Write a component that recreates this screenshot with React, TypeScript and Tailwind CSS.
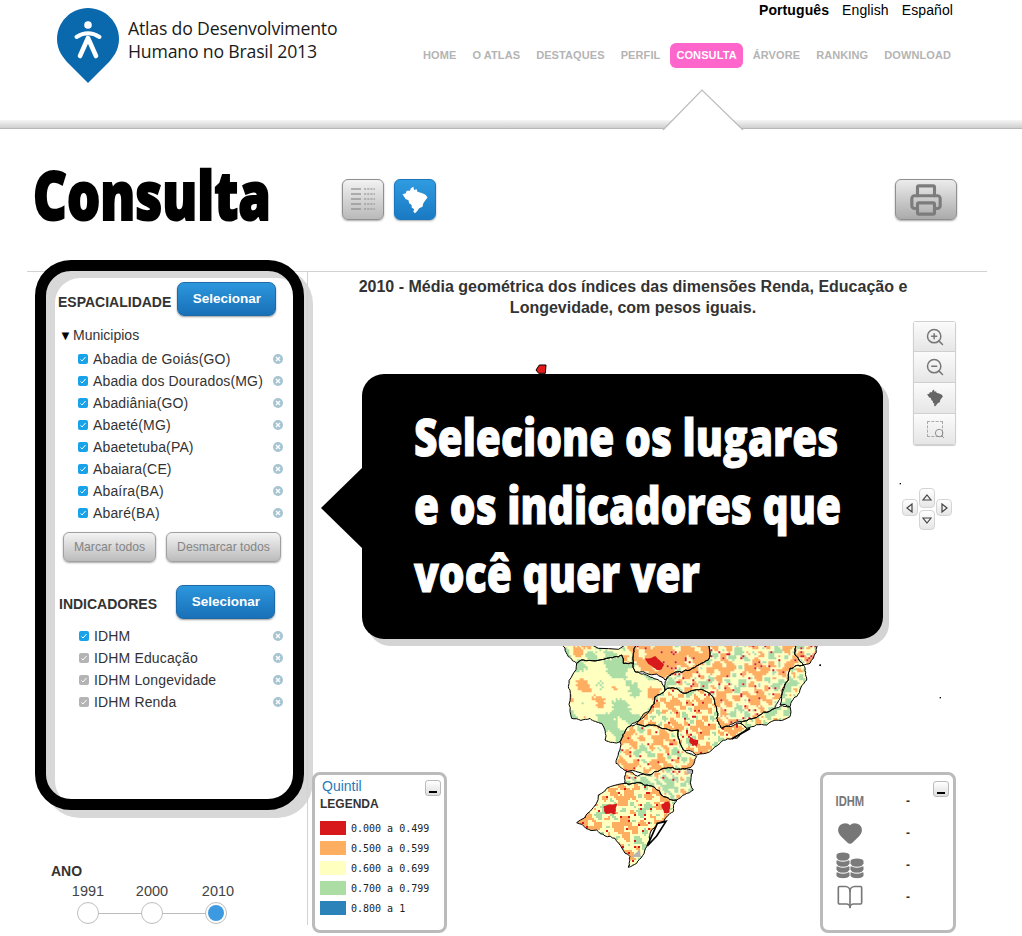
import { BookOpen, Heart, Printer, ZoomIn, ZoomOut, Search } from "lucide-react";

const NAV = ["HOME", "O ATLAS", "DESTAQUES", "PERFIL", "CONSULTA", "ÁRVORE", "RANKING", "DOWNLOAD"];
const PLACES = [
  "Abadia de Goiás(GO)",
  "Abadia dos Dourados(MG)",
  "Abadiânia(GO)",
  "Abaeté(MG)",
  "Abaetetuba(PA)",
  "Abaiara(CE)",
  "Abaíra(BA)",
  "Abaré(BA)",
];
const INDICATORS = [
  { name: "IDHM", active: true },
  { name: "IDHM Educação", active: false },
  { name: "IDHM Longevidade", active: false },
  { name: "IDHM Renda", active: false },
];
const LEGEND = [
  { color: "bg-[#d7191c]", label: "0.000 a 0.499" },
  { color: "bg-[#fdae61]", label: "0.500 a 0.599" },
  { color: "bg-[#ffffbf]", label: "0.600 a 0.699" },
  { color: "bg-[#abdda4]", label: "0.700 a 0.799" },
  { color: "bg-[#2b83ba]", label: "0.800 a 1" },
];

const BRAZIL = "M3 12L7 11L8 8L12 8L13 5L16 3L17 7L20 6L21 9L24 10L27 11L31 13L33 16L30 20L28 23L27 27L23 29L21 32L18 35L16 33L17 30L14 28L14 25L11 23L10 19L7 18L5 15Z";

// zoomed map coordinates: page x = 540 + x / 3, page y = 630 + y / 3
const STATES = [
  { id: "mt", pts: "60,30 290,30 280,70 280,100 250,100 245,75 200,85 130,90 110,100 85,80", o: 0.7, g: -0.2, r: 0.0, f: 0.7 },
  { id: "ms", pts: "110,100 130,90 200,85 245,75 250,100 280,100 285,125 320,135 365,155 375,180 345,200 330,240 300,270 260,295 240,335 195,330 185,280 150,265 95,265 90,180 85,170", o: 1.1, g: -0.3, r: 0.0, f: 0.45 },
  { id: "go", pts: "290,30 510,30 505,90 450,120 400,130 375,150 320,130 285,125 280,100 280,70", o: -0.45, g: -1.2, r: 0.03, f: 0.7 },
  { id: "mg", pts: "510,30 775,30 765,75 790,105 750,115 745,150 720,205 705,235 640,265 600,275 545,295 530,265 530,235 510,190 490,180 435,190 410,175 375,180 375,155 400,130 450,120 505,90", o: 0.2, g: -0.75, r: 0.035, f: 1 },
  { id: "ba", pts: "775,30 830,30 810,100 790,105 765,75", o: -0.1, g: -0.9, r: 0.2, f: 1 },
  { id: "es", pts: "750,115 790,105 800,150 770,200 750,230 720,225 745,150", o: 1.2, g: 0.1, r: 0.0, f: 1.2 },
  { id: "rj", pts: "705,235 750,230 750,260 680,285 620,295 600,280 640,265", o: 1, g: 0.0, r: 0.01, f: 1.4 },
  { id: "sp", pts: "375,180 410,175 435,190 490,180 510,190 530,235 530,265 545,295 600,280 620,295 590,325 540,340 470,375 430,360 415,300 340,285 290,282 330,240 345,200", o: 0.15, g: -0.95, r: 0.035, f: 1.2 },
  { id: "pr", pts: "260,295 290,282 340,285 415,300 430,360 470,380 455,410 410,418 360,420 330,435 260,425 228,400 240,335", o: 0.25, g: -0.8, r: 0.025, f: 1 },
  { id: "sc", pts: "258,425 330,435 360,420 410,418 458,420 460,480 410,510 370,500 340,470 290,458 255,460", o: 1, g: -0.05, r: 0.012, f: 1.3 },
  { id: "rs", pts: "255,460 290,458 340,470 370,500 410,510 400,545 360,580 320,650 290,700 265,712 270,680 225,625 170,600 110,578 175,495", o: 0.3, g: -0.7, r: 0.03, f: 0.9 },
];
const RED_PATCHES = [
  "315,85 345,78 372,105 365,118 350,120",
  "190,530 232,520 228,552 198,552",
  "365,522 388,515 388,548 372,550",
  "450,320 475,330 470,350 450,340",
];
const CELL = 6;
const COLORS = ["#ffffbf", "#fdae61", "#abdda4", "#d7191c"];

function rng(seed: number) {
  let s = seed;
  return () => {
    s = (s * 16807) % 2147483647;
    return s / 2147483647;
  };
}

// same offset for both states that share an edge, so borders stay together
function jagged(pts: string) {
  const list = pts.split(" ").map((p) => p.split(",").map(Number));
  const split = (a: number[], b: number[], depth: number): number[][] => {
    const len = Math.hypot(b[0] - a[0], b[1] - a[1]);
    if (depth === 0 || len < 8) return [a];
    const [p, q] = a[0] < b[0] || (a[0] === b[0] && a[1] < b[1]) ? [a, b] : [b, a];
    const h = Math.sin(p[0] * 12.9 + p[1] * 78.2 + q[0] * 37.7 + q[1] * 11.3) * 43758.5;
    const t = (h - Math.floor(h) - 0.5) * 0.28 * len;
    const mid = [(a[0] + b[0]) / 2 + ((q[1] - p[1]) / len) * t, (a[1] + b[1]) / 2 - ((q[0] - p[0]) / len) * t];
    return [...split(a, mid, depth - 1), ...split(mid, b, depth - 1)];
  };
  return list
    .flatMap((p, i) => split(p, list[(i + 1) % list.length], 3))
    .map((p) => `${p[0].toFixed(1)},${p[1].toFixed(1)}`)
    .join(" ");
}

const OUTLINES = STATES.map((s) => ({ ...s, outline: jagged(s.pts) }));

function statePaths(state: (typeof STATES)[number], seed: number) {
  const rand = rng(seed * 7919 + 13);
  const nums = state.pts.split(/[ ,]/).map(Number);
  const xs = nums.filter((_, i) => i % 2 === 0);
  const ys = nums.filter((_, i) => i % 2 === 1);
  const paths = ["", "", "", ""];
  const f = state.f;
  for (let x = Math.min(...xs) - 20; x < Math.max(...xs) + 20; x += CELL) {
    for (let y = Math.min(...ys) - 20; y < Math.max(...ys) + 20; y += CELL) {
      const n =
        (Math.sin(x * 0.061 * f + seed) +
          Math.sin(y * 0.073 * f + seed * 2) +
          Math.sin((x + y) * 0.113 * f) +
          Math.sin((x - y) * 0.151 * f + seed)) /
          2 +
        (rand() - 0.5) * 0.5;
      let c = 0;
      if (rand() < state.r) c = 3;
      else if (n < state.g) c = 2;
      else if (n > state.o) c = 1;
      paths[c] += `M${x} ${y}h${CELL}v${CELL}h-${CELL}z`;
    }
  }
  return paths;
}

function BrazilMap() {
  return (
    <svg className="absolute left-[222px] top-[88px]" width={420} height={520} viewBox="-30 -810 1260 1560">
      <defs>
        {OUTLINES.map((s) => (
          <clipPath key={s.id} id={`clip-${s.id}`}>
            <polygon points={s.outline} />
          </clipPath>
        ))}
      </defs>
      {OUTLINES.map((s, i) => (
        <g key={s.id} clipPath={`url(#clip-${s.id})`}>
          {statePaths(s, i + 3).map((d, c) => (
            <path key={c} d={d} fill={COLORS[c]} />
          ))}
        </g>
      ))}
      {RED_PATCHES.map((pts) => (
        <polygon key={pts} points={jagged(pts)} fill="#d7191c" />
      ))}
      <path d="M440 420L458 420L458 432L440 432Z M275 680L300 658L302 682Z" fill="#b5b5b5" />
      {OUTLINES.map((s) => (
        <polygon key={s.id} points={s.outline} fill="none" stroke="#000" strokeWidth={3} strokeLinejoin="round" />
      ))}
      <path d="M352 580L378 574L350 618L322 648Z" fill="#fff" stroke="#000" strokeWidth={5} />
      <path d="M575 327L630 295" stroke="#000" strokeWidth={6} />
      <polygon points="-12,-780 -2,-795 18,-795 16,-770 -4,-770" fill="#e31a1c" stroke="#000" strokeWidth={3} />
      <rect x={838} y={103} width={5} height={5} fill="#000" />
      <rect x={1079} y={-441} width={4} height={4} fill="#000" />
      <rect x={1199} y={201} width={4} height={4} fill="#000" />
    </svg>
  );
}

function Logo() {
  return (
    <svg width={62} height={76} viewBox="0 0 62 76">
      <path d="M31 0C48 0 62 14 62 31C62 42 56 50 50 56L31 75L12 56C6 50 0 42 0 31C0 14 14 0 31 0Z" fill="#0a68ac" />
      <circle cx={31} cy={17} r={3.8} fill="#fff" />
      <path d="M19.5 29Q31 21.5 42.5 29" fill="none" stroke="#fff" strokeWidth={4} strokeLinecap="round" />
      <path d="M23 48L31 30L39 48" fill="none" stroke="#fff" strokeWidth={4.6} strokeLinecap="round" strokeLinejoin="round" />
    </svg>
  );
}

function TableGlyph() {
  return (
    <svg width={26} height={28} viewBox="0 0 26 28" stroke="#8a8a8a" strokeWidth={1.2}>
      {[3, 8, 13, 18, 23].map((y) => (
        <g key={y}>
          <path d="M1 0h10" transform={`translate(0 ${y})`} />
          <path d="M14 0h11" strokeDasharray="2.2 1" transform={`translate(0 ${y})`} />
        </g>
      ))}
    </svg>
  );
}

function CheckMark({ active }: { active: boolean }) {
  return (
    <span className={`flex h-[10px] w-[10px] shrink-0 items-center justify-center rounded-[2px] ${active ? "bg-[#17a2ea]" : "bg-[#b4b4b4]"}`}>
      <svg width={8} height={8} viewBox="0 0 8 8" fill="none" stroke="#fff" strokeWidth={1}>
        <path d="M1.5 4.5L3 6L6.5 2" />
      </svg>
    </span>
  );
}

function RemoveIcon() {
  return (
    <svg width={10} height={10} viewBox="0 0 10 10" className="shrink-0">
      <circle cx={5} cy={5} r={5} fill="#a6c4d2" />
      <path d="M3 3L7 7M7 3L3 7" stroke="#fff" strokeWidth={1.3} />
    </svg>
  );
}

function SelectButton() {
  return (
    <button className="h-[34px] w-[99px] rounded-[7px] border border-[#1d6aa8] bg-gradient-to-b from-[#2c97dd] to-[#1970b8] pl-[1px] pt-[1px] text-[13.5px] font-bold text-white shadow-[0_1px_2px_rgba(0,0,0,0.4)]">
      Selecionar
    </button>
  );
}

function GrayButton({ label, width }: { label: string; width: string }) {
  return (
    <button className={`h-[30px] ${width} rounded-[6px] border border-[#a0a0a0] bg-gradient-to-b from-[#f3f3f3] to-[#bcbcbc] text-[12.2px] text-[#858585] shadow-[0_1px_2px_rgba(0,0,0,0.35)]`}>
      {label}
    </button>
  );
}

function Row({ label, active, inset }: { label: string; active: boolean; inset: string }) {
  return (
    <div className={`flex h-[22px] items-center ${inset} text-[14px] tracking-[0.15px] text-[#333]`}>
      <CheckMark active={active} />
      <span className="ml-[5px] flex-1 whitespace-nowrap">{label}</span>
      <RemoveIcon />
    </div>
  );
}

function MinusButton() {
  return (
    <span className="flex h-[16px] w-[16px] items-end justify-center rounded-[3px] border border-[#bbb] bg-gradient-to-b from-white to-[#dedede] pb-[2px]">
      <span className="h-[2px] w-[8px] bg-black" />
    </span>
  );
}

function ToolButton({ children, extra }: { children: React.ReactNode; extra: string }) {
  return (
    <div className={`flex h-[31px] items-center justify-center border border-[#d0d0d0] bg-gradient-to-b from-[#fbfbfb] to-[#e6e6e6] ${extra}`}>
      {children}
    </div>
  );
}

function PanButton({ d, extra }: { d: string; extra: string }) {
  return (
    <div className={`absolute flex items-center justify-center rounded-[4px] border border-[#d4d4d4] bg-gradient-to-b from-white to-[#e6e6e6] ${extra}`}>
      <svg width={10} height={10} viewBox="0 0 10 10" fill="none" stroke="#444" strokeWidth={1.2}>
        <path d={d} />
      </svg>
    </div>
  );
}

function Coins() {
  const stack = (x: number, ys: number[]) =>
    ys.map((y) => (
      <g key={`${x}-${y}`}>
        <path d={`M${x - 6.5} ${y}a6.5 2.6 0 0 1 13 0v2.6a6.5 2.6 0 0 1 -13 0z`} fill="#7b7b7b" />
        <path d={`M${x - 6.5} ${y + 3.6}a6.5 2.6 0 0 0 13 0`} fill="none" stroke="#fff" strokeWidth={1} />
      </g>
    ));
  return (
    <svg width={28} height={28} viewBox="0 0 28 28" className="shrink-0">
      {stack(7, [22, 16, 10, 4])}
      {stack(21, [22, 16, 10])}
    </svg>
  );
}

export default function App() {
  return (
    <div className="relative h-[936px] w-[1022px] overflow-hidden bg-white font-['Liberation_Sans',Arial,sans-serif]">
      <header className="relative h-[129px]">
        <div className="flex h-[120px] justify-between">
          <div className="ml-[57px] mt-[8px] flex">
            <Logo />
            <div className="ml-[9px] mt-[9px] font-['Open_Sans',sans-serif] text-[17.7px] leading-[23px] tracking-[-0.2px] text-[#1a1a1a]">
              <div>Atlas do Desenvolvimento</div>
              <div>Humano no Brasil 2013</div>
            </div>
          </div>
          <div className="flex flex-col items-end">
            <div className="mr-[69px] mt-[1px] flex h-[19px] items-center gap-[13px] text-[14px] tracking-[0.1px] text-black">
              <span className="font-bold">Português</span>
              <span>English</span>
              <span>Español</span>
            </div>
            <nav className="mr-[71px] mt-[23px] flex h-[25px] items-center gap-[16px] text-[11px] font-bold tracking-[0.1px] text-[#b4b4b4]">
              {NAV.map((item) =>
                item === "CONSULTA" ? (
                  <span key={item} className="mx-[-6px] flex h-[25px] items-center rounded-[6px] bg-[#ff66cc] px-[6px] text-white">
                    {item}
                  </span>
                ) : (
                  <span key={item}>{item}</span>
                )
              )}
            </nav>
          </div>
        </div>
        <div className="h-[9px] border-b border-[#b8b8b8] bg-gradient-to-b from-[#f6f6f6] to-[#cfcfcf]" />
        <svg className="absolute left-[662px] top-[88px]" width={82} height={44} viewBox="0 0 82 44">
          <path d="M1 42L40 2L81 42Z" fill="#fff" />
          <path d="M1 42L40 2L81 42" fill="none" stroke="#bcbcbc" strokeWidth={1.2} />
        </svg>
      </header>

      <section className="flex h-[131px] items-start">
        <h1 className="ml-[33px] mt-[19px] w-[309px] origin-left scale-x-[0.78] whitespace-nowrap font-['Open_Sans',sans-serif] text-[67px] font-extrabold leading-[92px] text-black [-webkit-text-stroke:2px_black]">
          Consulta
        </h1>
        <div className="mt-[50px] flex h-[41px] w-[42px] items-center justify-center rounded-[6px] border border-[#8f8f8f] bg-gradient-to-b from-[#f2f2f2] to-[#b9b9b9] shadow-[0_1px_2px_rgba(0,0,0,0.35)]">
          <TableGlyph />
        </div>
        <div className="ml-[10px] mt-[50px] flex h-[41px] w-[42px] items-center justify-center rounded-[6px] border border-[#1b77bd] bg-gradient-to-b from-[#2f9be0] to-[#1a7ac4] shadow-[0_1px_2px_rgba(0,0,0,0.35)]">
          <svg width={30} height={32} viewBox="0 0 36 38">
            <path d={BRAZIL} fill="#fff" />
          </svg>
        </div>
        <div className="ml-[459px] mt-[50px] flex h-[41px] w-[62px] items-center justify-center rounded-[6px] border border-[#8f8f8f] bg-gradient-to-b from-[#ececec] to-[#ababab] shadow-[0_1px_2px_rgba(0,0,0,0.35)]">
          <Printer size={34} strokeWidth={2.2} color="#7c7c7c" />
        </div>
      </section>

      <main className="ml-[27px] flex h-[665px] w-[960px]">
        <div className="relative w-[280px] shrink-0">
          <div className="absolute left-0 top-[11px] h-px w-[280px] bg-[#d2d2d2]" />
          <div className="relative ml-[8px] h-[550px] w-[269px] rounded-[36px] border-[11px] border-black bg-white pl-[12px] pr-[9px] pt-[11px] shadow-[9px_8px_0_#d8d8d8,inset_9px_7px_0_#d8d8d8]">
            <div className="flex items-center">
              <span className="mt-[6px] w-[119px] text-[14px] font-bold text-[#333]">ESPACIALIDADE</span>
              <SelectButton />
            </div>
            <div className="mt-[9px] flex h-[20px] items-center text-[14px] text-[#333]">
              <span className="w-[15px] pl-[1px] text-[13px] leading-none text-black">▼</span>
              Municipios
            </div>
            <div className="mt-[3px]">
              {PLACES.map((place) => (
                <Row key={place} label={place} active inset="ml-[20px] mr-[1px]" />
              ))}
            </div>
            <div className="ml-[5px] mt-[8px] flex gap-[10px]">
              <GrayButton label="Marcar todos" width="w-[93px]" />
              <GrayButton label="Desmarcar todos" width="w-[115px]" />
            </div>
            <div className="mt-[23px] flex items-center">
              <span className="ml-[1px] mt-[5px] w-[117px] text-[14px] font-bold text-[#333]">INDICADORES</span>
              <SelectButton />
            </div>
            <div className="mt-[6px]">
              {INDICATORS.map((item) => (
                <Row key={item.name} label={item.name} active={item.active} inset="ml-[21px] mr-[1px]" />
              ))}
            </div>
          </div>

          <div className="ml-[24px] mt-[52px] text-[14px] font-bold leading-[18px] text-[#333]">ANO</div>
          <div className="relative ml-[29px] w-[192px]">
            <div className="grid grid-cols-3 pt-[1px] text-center text-[14.5px] leading-[20px] text-[#444]">
              <span>1991</span>
              <span>2000</span>
              <span className="pl-[4px]">2010</span>
            </div>
            <div className="absolute left-[32px] right-[32px] top-[33px] h-px bg-[#bbb]" />
            <div className="relative mt-[1px] grid grid-cols-3 justify-items-center">
              <span className="h-[22px] w-[22px] rounded-full border border-[#bdbdbd] bg-white" />
              <span className="h-[22px] w-[22px] rounded-full border border-[#bdbdbd] bg-white" />
              <span className="flex h-[22px] w-[22px] items-center justify-center rounded-full border border-[#bdbdbd] bg-white">
                <span className="h-[16px] w-[16px] rounded-full bg-[#3d9ae0]" />
              </span>
            </div>
          </div>
        </div>

        <div className="relative mt-[11px] flex-1 border-l border-t border-[#d2d2d2]">
          <h2 className="mx-auto mt-[4px] w-[600px] pr-[29px] text-center text-[16px] font-bold leading-[21px] text-[#333]">
            2010 - Média geométrica dos índices das dimensões Renda, Educação e Longevidade, com pesos iguais.
          </h2>
          <BrazilMap />

          <div className="absolute left-[605px] top-[49px] w-[43px] overflow-hidden rounded-[3px] shadow-[0_1px_1px_rgba(0,0,0,0.2)]">
            <ToolButton extra="">
              <ZoomIn size={20} color="#777" strokeWidth={1.8} />
            </ToolButton>
            <ToolButton extra="border-t-0">
              <ZoomOut size={20} color="#777" strokeWidth={1.8} />
            </ToolButton>
            <ToolButton extra="border-t-0">
              <svg width={20} height={20} viewBox="0 0 36 38">
                <path d={BRAZIL} fill="#666" />
              </svg>
            </ToolButton>
            <ToolButton extra="border-t-0">
              <span className="relative h-[16px] w-[16px] border border-dashed border-[#aaa]">
                <Search size={11} color="#888" strokeWidth={2} className="absolute -bottom-[3px] -right-[3px]" />
              </span>
            </ToolButton>
          </div>

          <div className="absolute left-[594px] top-[216px] h-[44px] w-[52px]">
            <PanButton d="M5 2L9 7H1Z" extra="left-[17px] top-[0px] z-10 h-[20px] w-[16px]" />
            <PanButton d="M5 8L9 3H1Z" extra="left-[17px] top-[22px] z-10 h-[20px] w-[16px]" />
            <PanButton d="M2 5L7 1V9Z" extra="left-0 top-[11px] h-[17px] w-[16px]" />
            <PanButton d="M8 5L3 1V9Z" extra="left-[34px] top-[11px] h-[17px] w-[16px]" />
          </div>

          <div className="absolute left-[54px] top-[102px] z-10 h-[265px] w-[521px] rounded-[22px] bg-black pl-[52px] pt-[28px] shadow-[6px_7px_0_#d4d4d4]">
            <span className="absolute -left-[41px] top-[93px] border-y-[41px] border-r-[42px] border-y-transparent border-r-black" />
            <div className="origin-left scale-x-[0.798] whitespace-nowrap font-['Open_Sans',sans-serif] text-[51px] font-extrabold leading-[68px] text-white [-webkit-text-stroke:1px_white]">
              <div>Selecione os lugares</div>
              <div>e os indicadores que</div>
              <div>você quer ver</div>
            </div>
          </div>

          <div className="absolute left-[4px] top-[500px] h-[161px] w-[135px] rounded-[8px] border-[3px] border-[#bbb] bg-white pl-[5px] pt-[2px]">
            <div className="flex items-start justify-between pr-[3px]">
              <span className="ml-[2px] text-[14px] leading-[18px] text-[#2a7ab8]">Quintil</span>
              <span className="mt-[3px]">
                <MinusButton />
              </span>
            </div>
            <div className="text-[12px] font-bold leading-[16px] text-[#333]">LEGENDA</div>
            <div className="mt-[9px] flex flex-col gap-[6px]">
              {LEGEND.map((row) => (
                <div key={row.label} className="flex h-[14px] items-center">
                  <span className={`h-[14px] w-[26px] ${row.color}`} />
                  <span className="ml-[5px] font-['DejaVu_Sans_Mono',monospace] text-[10px] text-[#222]">{row.label}</span>
                </div>
              ))}
            </div>
          </div>

          <div className="absolute left-[512px] top-[500px] h-[161px] w-[136px] rounded-[8px] border-[3px] border-[#bbb] bg-white">
            <span className="absolute right-[4px] top-[6px]">
              <MinusButton />
            </span>
            <div className="ml-[13px] mt-[10px] flex flex-col">
              {["idhm", "heart", "coins", "book"].map((kind) => (
                <div key={kind} className="flex h-[32px] items-center">
                  <span className="flex w-[28px] items-center justify-center">
                    {kind === "idhm" && (
                      <span className="origin-center scale-x-[0.8] text-[14px] font-bold text-[#777]">IDHM</span>
                    )}
                    {kind === "heart" && <Heart size={26} fill="#777" color="#777" />}
                    {kind === "coins" && <Coins />}
                    {kind === "book" && <BookOpen size={28} color="#777" strokeWidth={1.4} />}
                  </span>
                  <span className="ml-[42px] text-[12px] font-bold text-[#333]">-</span>
                </div>
              ))}
            </div>
          </div>
        </div>
      </main>
    </div>
  );
}
